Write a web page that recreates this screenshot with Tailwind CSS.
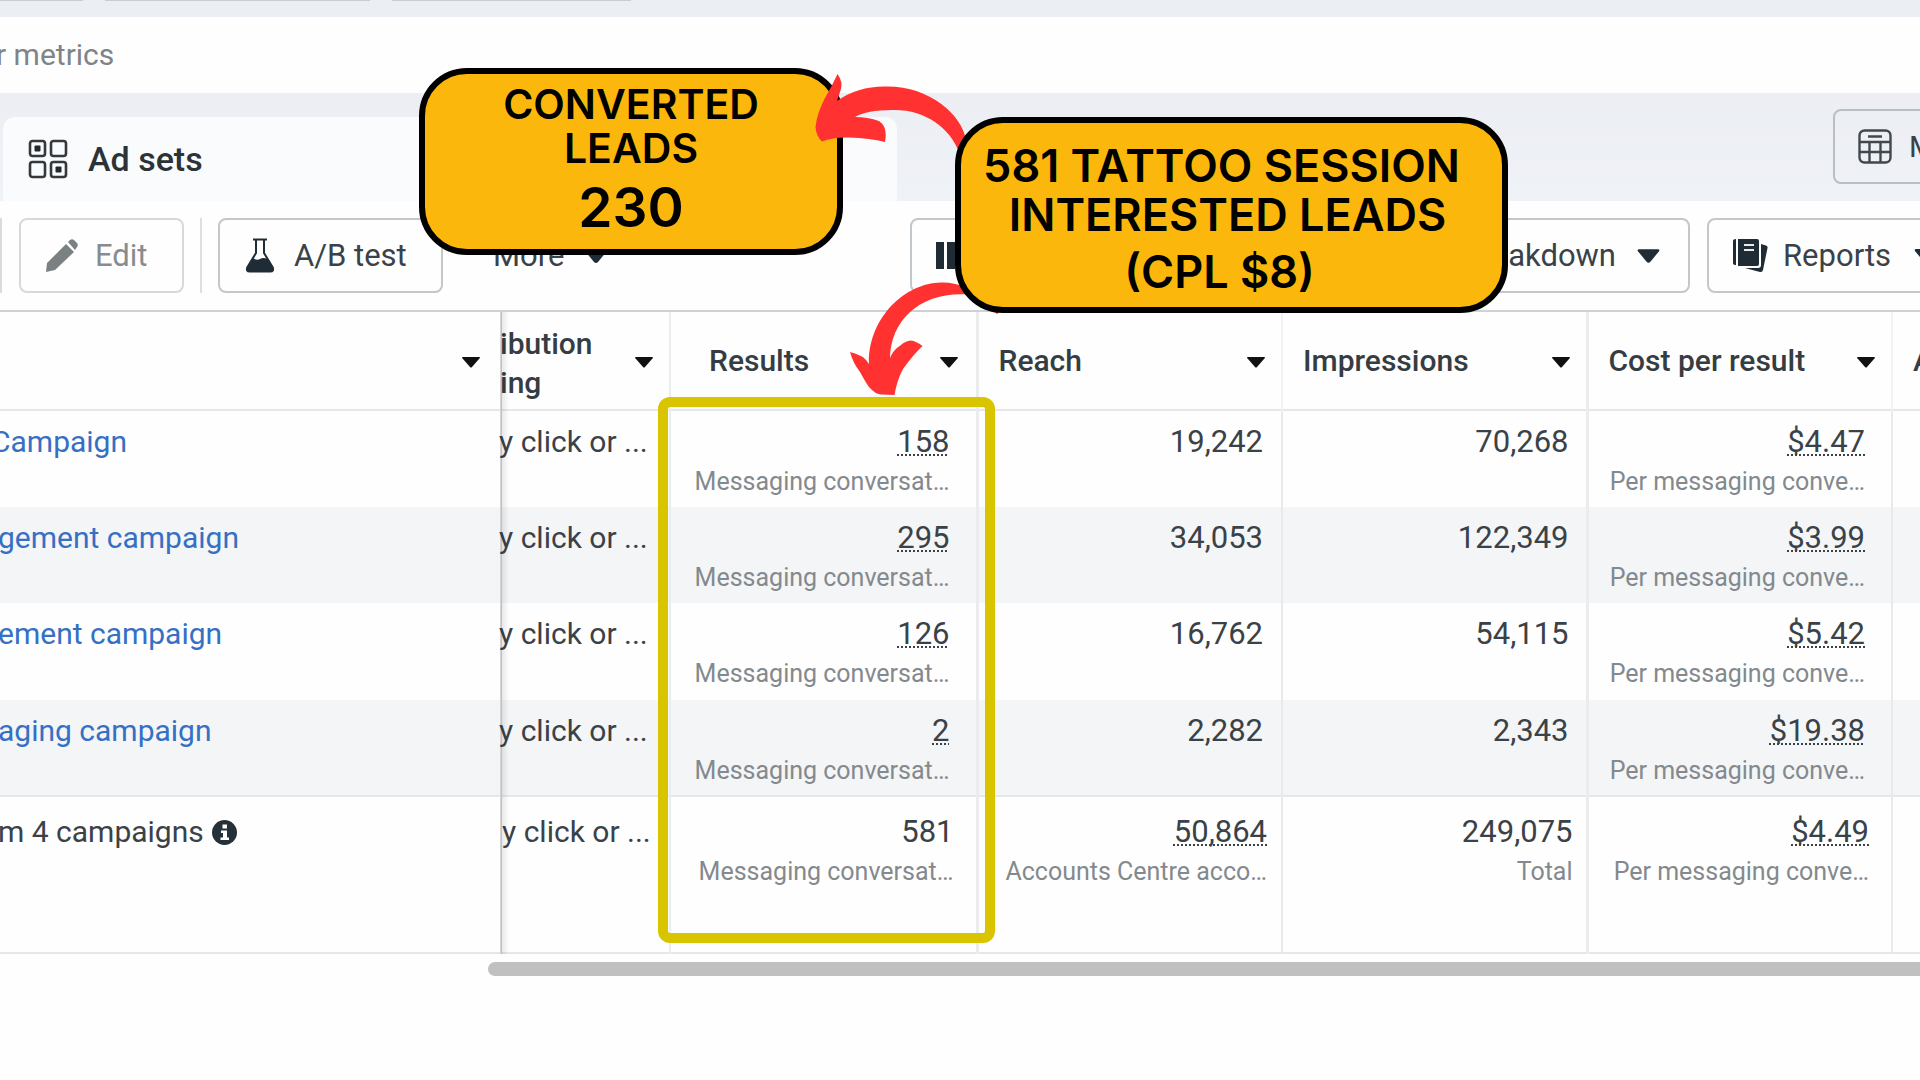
<!DOCTYPE html>
<html lang="en">
<head>
<meta charset="utf-8">
<meta name="viewport" content="width=device-width, initial-scale=1">
<title>Ads Manager – Campaign results</title>
<script src="https://cdn.jsdelivr.net/npm/@tailwindcss/browser@4"></script>
</head>
<body class="relative min-h-screen overflow-x-hidden bg-[#fefefe] font-['Roboto',sans-serif] text-[30px] leading-10 text-[#3a4248]">

<!-- Bottom edge of the filter chips -->
<div class="flex h-[17px] gap-[22px] overflow-hidden bg-[#ebeef3]">
  <span class="h-px w-[83px] bg-[#c9cdd2]"></span>
  <span class="h-px w-[265px] bg-[#c9cdd2]"></span>
  <span class="h-px w-[239px] bg-[#c9cdd2]"></span>
</div>

<!-- Search -->
<div class="flex h-[76px] items-center overflow-hidden">
  <input type="text" aria-label="Search by name, ID or metrics" value="r metrics" class="ml-[-4px] w-full bg-transparent text-[#7e8488] outline-none">
</div>

<!-- Level tabs -->
<nav class="flex h-[108px] items-end justify-between overflow-hidden bg-linear-to-b from-[#eceef4] to-[#eff2f6]">
  <a href="#" class="ml-[3px] flex h-[84px] w-[894px] items-center gap-5 rounded-t-xl bg-[#f9fbfd] pl-[25px] text-[34px] font-medium text-[#2b3338]">
    <svg class="h-10 w-10 shrink-0" viewBox="0 0 40 40" fill="none" stroke="#33393d" stroke-width="2.6">
      <rect x="2" y="2" width="15" height="15" rx="2.5"/><rect x="23" y="2" width="15" height="15" rx="2.5"/>
      <rect x="2" y="23" width="15" height="15" rx="2.5"/><rect x="23" y="23" width="15" height="15" rx="2.5"/>
      <rect x="6.5" y="6.500" width="6" height="6" rx="1" fill="#22282c" stroke="none"/><rect x="27.500" y="27.500" width="6" height="6" rx="1" fill="#22282c" stroke="none"/>
    </svg>
    Ad sets
  </a>
  <button class="mr-[-12px] mb-[17px] flex h-[75px] w-[99px] items-center gap-[17px] overflow-hidden rounded-lg border-2 border-[#b9bfc6] pl-[23px] whitespace-nowrap">
    <svg class="h-[35px] w-[34px] shrink-0" viewBox="0 0 34 35" fill="none" stroke="#41494f" stroke-width="2.400">
      <rect x="1.500" y="1.500" width="31" height="32" rx="5"/>
      <path d="M1.500 13h31M1.500 23h31M11.500 13v20.500M22.500 13v20.500M10 7.500h14"/>
    </svg>
    More
  </button>
</nav>

<!-- Toolbar -->
<div class="flex h-[111px] items-center border-b-2 border-[#cfd2d4] text-[31px]">
  <span class="h-[75px] w-0.5 bg-[#d9dcdf]"></span>
  <button class="ml-[17px] flex h-[75px] w-[165px] items-center gap-[17px] rounded-lg border-2 border-[#d5d8dc] pl-[25px] text-[#878c90]">
    <svg class="h-[33px] w-8" viewBox="0 0 32 33" fill="#7b8083"><path d="M0 33l1-9L20 5l8 8L9 31zM22 3l2-2c1-1 3-1 4 0l3 3c1 1 1 3 0 4l-2 3z"/></svg>
    Edit
  </button>
  <span class="ml-4 h-[75px] w-0.5 bg-[#dddfe1]"></span>
  <button class="ml-4 flex h-[75px] w-[225px] items-center gap-[19px] rounded-lg border-2 border-[#c2c7cc] pl-[25px]">
    <svg class="h-[35px] w-[30px]" viewBox="0 0 30 35" fill="none" stroke="#1f2c35" stroke-width="2"><path d="M8 1.500h14M11 2v13L2.500 29c-1.500 3 0 4.500 2 4.500h21c2 0 3.500-1.500 2-4.500L19 15V2"/><path d="M8 20q4 3 7 1t8 0l5 8c1.500 3 0 5-2.500 5h-21C2 34 1 32 2.500 29z" fill="#1f2c35" stroke="none"/></svg>
    A/B test
  </button>
  <button class="ml-[50px] flex items-center gap-5">More
    <svg class="h-3.5 w-6" viewBox="0 0 24 14" fill="#1f2c35"><path d="M2 0h20q2 0 1 2L14 13q-2 2-4 0L1 2Q0 0 2 0z"/></svg>
  </button>
  <div class="ml-auto flex">
    <button class="flex h-[75px] w-[299px] items-center gap-5 rounded-lg border-2 border-[#c2c7cc] pl-6">
      <svg class="h-[27px] w-[31px]" viewBox="0 0 31 27" fill="#1f2c35"><path d="M0 0h8v27H0zM11 0h8v27h-8zM22 0h8v27h-8z"/></svg>
      Columns
    </button>
    <button class="ml-[17px] flex h-[75px] w-[464px] items-center justify-end gap-[21px] rounded-lg border-2 border-[#c2c7cc] pr-7">Breakdown
      <svg class="h-3.5 w-[23px]" viewBox="0 0 24 14" fill="#1f2c35"><path d="M2 0h20q2 0 1 2L14 13q-2 2-4 0L1 2Q0 0 2 0z"/></svg>
    </button>
  </div>
  <button class="mr-[-35px] ml-[17px] flex h-[75px] w-[248px] items-center gap-[15px] rounded-lg border-2 border-[#c2c7cc] pl-6">
    <svg class="h-[35px] w-[35px]" viewBox="0 0 35 35" fill="#1f2c35"><path d="M0 3q0-2 3-2v26q-3 0-3-2zM5 1h19q2 0 2 2v23q0 2-2 2H5z"/><path d="M28 6l5 1.500q2 .5 1.500 2.500L30 32q-.5 2.500-3 2L12 30h13q3 0 3-3z"/><path d="M11 7h10M11 12h10" stroke="#e8ebed" stroke-width="2"/></svg>
    Reports
    <svg class="ml-2 h-3.5 w-6" viewBox="0 0 24 14" fill="#1f2c35"><path d="M2 0h20q2 0 1 2L14 13q-2 2-4 0L1 2Q0 0 2 0z"/></svg>
  </button>
</div>

<!-- Results table -->
<main class="relative overflow-hidden">
  <table class="w-full table-fixed border-collapse whitespace-nowrap">
    <colgroup><col class="w-[501px]"><col class="w-[169px]"><col class="w-[307px]"><col class="w-[305px]"><col class="w-[305px]"><col class="w-[305px]"><col></colgroup>
    <thead class="text-left text-[#353d43]">
      <tr class="h-[98px] border-b-2 border-[#e6e7e8]">
        <th scope="col" class="border-r-2 border-[#d3d5d8] p-0 pt-1 pr-5"><svg aria-label="Campaign" class="ml-auto h-[11px] w-[18px]" viewBox="0 0 18 11"><path d="M1 0h16q2 0 0 2l-7 8q-1 1-2 0L1 2Q-1 0 1 0z" fill="#111"/></svg></th>
        <th scope="col" class="border-r-2 border-[#ebeced] p-0 pt-1 pr-4 font-medium"><div class="flex items-center justify-between"><span class="-ml-0.5 leading-[39px]">ibution<br>ing</span><svg class="h-[11px] w-[18px]" viewBox="0 0 18 11"><path d="M1 0h16q2 0 0 2l-7 8q-1 1-2 0L1 2Q-1 0 1 0z" fill="#111"/></svg></div></th>
        <th scope="col" class="border-r-3 border-[#ebeced] p-0 pt-1 pr-[18px] pl-[38px] font-medium"><div class="flex items-center justify-between"><span class="pb-1">Results</span><svg class="h-[11px] w-[18px]" viewBox="0 0 18 11"><path d="M1 0h16q2 0 0 2l-7 8q-1 1-2 0L1 2Q-1 0 1 0z" fill="#111"/></svg></div></th>
        <th scope="col" class="border-r-2 border-[#f1f2f2] p-0 pt-1 pr-4 pl-5 font-medium"><div class="flex items-center justify-between"><span class="pb-1">Reach</span><svg class="h-[11px] w-[18px]" viewBox="0 0 18 11"><path d="M1 0h16q2 0 0 2l-7 8q-1 1-2 0L1 2Q-1 0 1 0z" fill="#111"/></svg></div></th>
        <th scope="col" class="border-r-3 border-[#ebeced] p-0 pt-1 pr-4 pl-5 font-medium"><div class="flex items-center justify-between"><span class="pb-1">Impressions</span><svg class="h-[11px] w-[18px]" viewBox="0 0 18 11"><path d="M1 0h16q2 0 0 2l-7 8q-1 1-2 0L1 2Q-1 0 1 0z" fill="#111"/></svg></div></th>
        <th scope="col" class="border-r-2 border-[#f1f2f2] p-0 pt-1 pr-4 pl-5 font-medium"><div class="flex items-center justify-between"><span class="pb-1">Cost per result</span><svg class="h-[11px] w-[18px]" viewBox="0 0 18 11"><path d="M1 0h16q2 0 0 2l-7 8q-1 1-2 0L1 2Q-1 0 1 0z" fill="#111"/></svg></div></th>
        <th scope="col" class="overflow-hidden p-0 pl-5 font-medium">Amount</th>
      </tr>
    </thead>
    <tbody id="rows"></tbody>
    <tfoot id="total"></tfoot>
  </table>
  <div class="pointer-events-none absolute inset-y-0 left-[501px] w-2 bg-linear-to-r from-black/10 to-transparent"></div>
</main>
<div class="mt-2 ml-[488px] h-3.5 rounded-l-full bg-[#c0c0c0]"></div>

<!-- Highlight round the results column -->
<div class="absolute top-[397px] left-[658px] h-[546px] w-[337px] rounded-xl border-10 border-[#d9c400]"></div>

<!-- Callouts -->
<div class="absolute top-[68px] left-[419px] h-[187px] w-[424px] rounded-[48px] border-6 border-black bg-[#fbb70c] pt-2 text-center font-['Inter',sans-serif] text-[41px] leading-11 font-semibold text-black">
  <p>CONVERTED</p><p>LEADS</p><p class="mt-1.5 text-[55px] leading-[62px]">230</p>
</div>
<svg class="absolute top-0 left-0 h-[420px] w-[1000px]" viewBox="0 0 1000 420" fill="#ff3131">
  <path d="M837.500 74Q843 82 841 89L837 101Q858 86 886 86.500C930 86 962 115 966 140L959 152C950 128 925 109 892 110Q867 110 855 117Q868 117 879 121Q888 127 885 142Q870 138 849 137.500Q833 137 822 141.500Q816 136 815.500 127Q817 113 825 98Q832 86 837.500 74z"/>
  <path d="M965 287Q953 282 941 282.500C905 283 868 318 869 364Q864 355 850 352Q853 363 860 372Q866 383 869 387Q876 395 882 394.500L894.500 395Q897 380 903 369Q913 355 922.500 346Q916 341 911 340.500Q905 341 901 345Q893 350 890 358C891 320 920 292 967 294.500zM993 311l4 3 4-3z"/>
</svg>
<div class="absolute top-[117px] left-[955px] h-[196px] w-[553px] rounded-[48px] border-6 border-black bg-[#fbb70c] pt-[18px] text-center font-['Inter',sans-serif] text-[45px] leading-[49px] font-semibold whitespace-nowrap text-black">
  <p class="pr-5">581 TATTOO SESSION</p><p class="pr-2">INTERESTED LEADS</p><p class="mt-2 pr-6">(CPL $8)</p>
</div>

<script>
  const rows = [
    ['Campaign', '158', '19,242', '70,268', '$4.47'],
    ['gement campaign', '295', '34,053', '122,349', '$3.99'],
    ['ement campaign', '126', '16,762', '54,115', '$5.42'],
    ['aging campaign', '2', '2,282', '2,343', '$19.38'],
  ];
  const dotted = t => `<span class="underline decoration-dotted decoration-2 underline-offset-2 [text-decoration-skip-ink:none]">${t}</span>`;
  const sub = t => `<div class="text-[25px] text-[#84898d]">${t}</div>`;
  const msg = sub('Messaging conversat…'), per = sub('Per messaging conve…');
  document.getElementById('rows').innerHTML = rows.map(([n, r, reach, imp, cost]) => `
    <tr class="h-[97px] text-right align-top text-[31px] even:h-24 even:bg-[#f3f5f7]">
      <td class="border-r-2 border-[#d3d5d8] p-0 pt-[11px] text-left text-[30px]"><a href="#" class="text-[#3570c4] ${n === 'Campaign' ? 'ml-[-9px]' : 'ml-[-2px]'}">${n}</a></td>
      <td class="border-r-2 border-[#ebeced] p-0 pt-[11px] text-left text-[30px]"><div class="ml-[-3px]">y click or ...</div></td>
      <td class="border-r-3 border-[#ebeced] p-0 pt-[11px] pr-[26px]">${dotted(r)}${msg}</td>
      <td class="border-r-2 border-[#e8eaeb] p-0 pt-[11px] pr-[18px]">${reach}</td>
      <td class="border-r-3 border-[#ebeced] p-0 pt-[11px] pr-[17px]">${imp}</td>
      <td class="border-r-2 border-[#e8eaeb] p-0 pt-[11px] pr-[26px]">${dotted(cost)}${per}</td>
      <td></td>
    </tr>`).join('');
  document.getElementById('total').innerHTML = `
    <tr class="h-[157px] border-y-2 border-[#e6e7e8] text-right align-top text-[31px]">
      <td class="border-r-2 border-[#d3d5d8] p-0 pt-[15px] text-left text-[30px]"><div class="ml-[-2px] flex items-center gap-2">m 4 campaigns
        <svg class="h-[25px] w-[25px]" viewBox="0 0 25 25"><circle cx="12.500" cy="12.500" r="12.500" fill="#263038"/><path d="M10.500 4.500h4.500v4h-4.500zM9 10.500h6v7h2v2.500H8.500v-2.500h2.500V13H9z" fill="#fff"/></svg></div></td>
      <td class="border-r-2 border-[#ebeced] p-0 pt-[15px] text-left text-[30px]">y click or ...</td>
      <td class="border-r-3 border-[#ebeced] p-0 pt-[15px] pr-[22px]">581${msg}</td>
      <td class="border-r-2 border-[#e8eaeb] p-0 pt-[15px] pr-3.5">${dotted('50,864')}${sub('Accounts Centre acco…')}</td>
      <td class="border-r-3 border-[#ebeced] p-0 pt-[15px] pr-[13px]">249,075${sub('Total')}</td>
      <td class="border-r-2 border-[#e8eaeb] p-0 pt-[15px] pr-[22px]">${dotted('$4.49')}${per}</td>
      <td></td>
    </tr>`;
</script>
</body>
</html>
